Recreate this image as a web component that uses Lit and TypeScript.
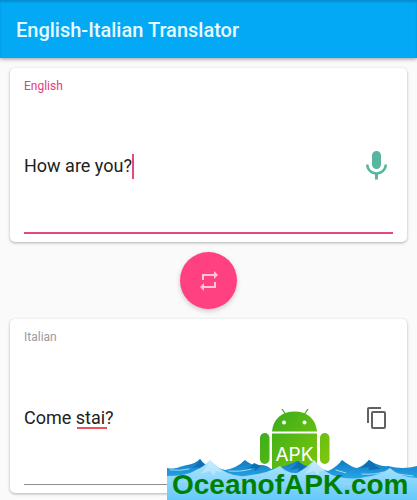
import { LitElement, html, css, svg, nothing } from "lit";
import { customElement, property } from "lit/decorators.js";
import { classMap } from "lit/directives/class-map.js";

const micIcon = html`<svg class="icon" width="33" height="36" viewBox="1 0 22 24" aria-hidden="true">
  <path fill="#57b5a0" d="M12 14c1.66 0 2.99-1.34 2.99-3L15 5c0-1.66-1.34-3-3-3S9 3.34 9 5v6c0 1.66 1.34 3 3 3zm5.3-3c0 3-2.54 5.1-5.3 5.1S6.7 14 6.7 11H5c0 3.41 2.72 6.23 6 6.72V21h2v-3.28c3.28-.48 6-3.3 6-6.72h-1.7z"/>
</svg>`;

const copyIcon = html`<svg class="icon" width="24" height="24" viewBox="0 0 24 24" aria-hidden="true">
  <path fill="#616161" d="M16 1H4c-1.1 0-2 .9-2 2v14h2V3h12V1zm3 4H8c-1.1 0-2 .9-2 2v14c0 1.1.9 2 2 2h11c1.1 0 2-.9 2-2V7c0-1.1-.9-2-2-2zm0 16H8V7h11v14z"/>
</svg>`;

@customElement("translate-card")
export class TranslateCard extends LitElement {
  @property() label = "";
  @property() value = "";
  @property({ type: Boolean }) active = false;
  @property({ type: Boolean }) flagged = false;

  static styles = css`
    :host {
      display: block;
      box-sizing: border-box;
      padding: 10px 14px 8px;
      border-radius: 5px;
      background: #fff;
      box-shadow: 0 1px 3px rgba(0, 0, 0, 0.3);
    }
    .label {
      display: block;
      font-size: 12px;
      line-height: 16px;
      color: #9b9b9b;
    }
    .label.active {
      color: #e0407c;
    }
    .field {
      display: flex;
      align-items: center;
      box-sizing: border-box;
      height: 140px;
      padding-top: 6px;
      border-bottom: 1px solid #8f8f8f;
    }
    .field.active {
      border-bottom: 2px solid #e5487f;
    }
    .input {
      field-sizing: content;
      min-width: 0;
      max-width: 100%;
      padding: 0;
      border: 0;
      outline: 0;
      background: none;
      color: #212121;
      caret-color: transparent;
      font: inherit;
      font-size: 18px;
      line-height: 24px;
    }
    .input.flagged {
      background: linear-gradient(#f0525a, #f0525a) 53px 21px / 30px 2px no-repeat;
    }
    .caret {
      width: 2px;
      height: 25px;
      background: #e5487f;
    }
    .action {
      display: grid;
      place-items: center;
      width: 33px;
      height: 36px;
      margin-left: auto;
      padding: 0;
      border: 0;
      background: none;
      cursor: pointer;
    }
    .icon {
      display: block;
    }
  `;

  render() {
    const on = { active: this.active };
    return html`
      <label class=${classMap({ label: true, ...on })} for="text">${this.label}</label>
      <div class=${classMap({ field: true, ...on })}>
        <input
          id="text"
          class=${classMap({ input: true, flagged: this.flagged })}
          type="text"
          spellcheck="false"
          .value=${this.value}
        />
        ${this.active ? html`<span class="caret"></span>` : nothing}
        <button class="action" type="button" aria-label=${this.active ? "Speak" : "Copy"}>
          ${this.active ? micIcon : copyIcon}
        </button>
      </div>
    `;
  }
}

@customElement("ocean-badge")
export class OceanBadge extends LitElement {
  static styles = css`
    :host {
      display: block;
    }
    .art {
      display: block;
    }
    .apk {
      font: 400 19px "Inter", sans-serif;
      fill: #fff;
    }
    .site {
      font: 700 28px "Liberation Sans", sans-serif;
      fill: #008000;
    }
  `;

  private robot = svg`
    <path d="M115 0l4 6M141 0l-4 6" stroke="#4aab22" stroke-width="1.3" stroke-linecap="round"/>
    <g fill="url(#green)">
      <path d="M105 22.5C106 10 115 2.500 127.500 2.500S149 10 150 22.500z"/>
      <rect x="93" y="24" width="9.5" height="31" rx="4.7"/>
      <rect x="153" y="24" width="9.5" height="31" rx="4.7"/>
      <path d="M105 24.5h45V62h-45z"/>
    </g>
    <circle cx="117" cy="13.5" r="2" fill="#fff"/>
    <circle cx="137.5" cy="13.5" r="2" fill="#fff"/>
    <text class="apk" x="127.5" y="52" text-anchor="middle">APK</text>
  `;

  private waves = svg`
    <path fill="url(#deep)" d="M0 59C9 61 13 57 20 56Q28 55 33 50Q38 57 44 57L58 61Q70 59 78 51Q86 58 94 56Q100 56 104 60Q121 57 130 52Q137 58 146 57L161 62Q170 58 175 51Q184 58 190 59Q198 56 202 51Q212 58 221 57Q236 61 250 57V91H0z"/>
    <path fill="#0f6fb5" d="M33 50Q31 56 25 59L32 58 31 62 38 57zM87 54Q84 58 79 60L88 59 88 62 94 57zM131 52Q128 58 122 61L132 59 131 63 139 58zM202 51Q198 56 193 59L203 58 201 61 213 60 208 56z"/>
    <path fill="url(#foam)" d="M0 67Q20 67 29 61Q38 57 43 51Q52 60 61 64Q72 69 84 66Q101 64 113 57Q121 65 130 64Q140 59 147 51Q155 61 165 66Q183 72 198 68Q214 66 223 59Q232 68 250 69V91H0z"/>
    <path fill="none" stroke="#9adcfb" stroke-linecap="round" d="M3 61Q14 62 22 60M62 62Q75 63 84 60M169 61L179 64M195 65Q208 66 216 63M231 65L246 67M8 73Q22 73 31 69M70 73Q88 73 98 69M176 75Q192 76 204 73"/>
    <path fill="#fff" opacity=".28" d="M43 51Q39 60 33 65L43 62 47 67 49 62 55 63zM147 51Q143 60 137 65L147 62 151 67 153 62 158 62z"/>
  `;

  render() {
    return html`<svg class="art" width="250" height="91" viewBox="0 0 250 91" role="img" aria-label="OceanofAPK.com">
      <defs>
        <linearGradient id="green" gradientUnits="userSpaceOnUse" x1="93" y1="10" x2="162" y2="60">
          <stop offset="0" stop-color="#35ab1c"/>
          <stop offset="1" stop-color="#83c80c"/>
        </linearGradient>
        <linearGradient id="deep" gradientUnits="userSpaceOnUse" x1="0" y1="51" x2="0" y2="70">
          <stop offset="0" stop-color="#1379bf"/>
          <stop offset="1" stop-color="#27a8e8"/>
        </linearGradient>
        <linearGradient id="foam" gradientUnits="userSpaceOnUse" x1="0" y1="51" x2="0" y2="91">
          <stop offset="0" stop-color="#b0e2fb"/>
          <stop offset=".5" stop-color="#8bd7fb"/>
          <stop offset="1" stop-color="#66c8fa"/>
        </linearGradient>
      </defs>
      ${this.robot} ${this.waves}
      <text class="site" x="5" y="85">OceanofAPK.com</text>
    </svg>`;
  }
}

@customElement("app-root")
export class AppRoot extends LitElement {
  static styles = css`
    :host {
      display: block;
      position: relative;
      min-height: 100vh;
      background: #fafafa;
      font-family: Roboto, sans-serif;
    }
    .bar {
      display: flex;
      align-items: center;
      height: 58px;
      padding: 0 16px;
      background: #03a9f4;
      box-shadow: 0 1px 4px rgba(0, 0, 0, 0.4), inset 0 2px 2px rgba(0, 80, 130, 0.3);
    }
    .title {
      margin: 0;
      padding-top: 2px;
      font-size: 20px;
      font-weight: 500;
      line-height: 28px;
      color: #e6fbff;
    }
    .main {
      display: flex;
      flex-direction: column;
      gap: 10px;
      padding: 10px 10px 7px;
    }
    .swap {
      display: grid;
      place-items: center;
      align-self: center;
      width: 57px;
      height: 57px;
      padding: 0;
      border: 0;
      border-radius: 50%;
      background: #ff4081;
      box-shadow: 0 2px 5px rgba(0, 0, 0, 0.2);
      cursor: pointer;
    }
    .badge {
      position: absolute;
      right: 0;
      bottom: 0;
      pointer-events: none;
    }
  `;

  render() {
    return html`
      <header class="bar"><h1 class="title">English-Italian Translator</h1></header>
      <main class="main">
        <translate-card label="English" value="How are you?" active></translate-card>
        <button class="swap" type="button" aria-label="Swap languages">
          <svg width="24" height="24" viewBox="0 0 24 24" aria-hidden="true">
            <path fill="#ffc4d8" d="M7 7h10v3l4-4-4-4v3H5v6h2V7zm10 10H7v-3l-4 4 4 4v-3h12v-6h-2v4z"/>
          </svg>
        </button>
        <translate-card label="Italian" value="Come stai?" flagged></translate-card>
      </main>
      <ocean-badge class="badge"></ocean-badge>
    `;
  }
}
